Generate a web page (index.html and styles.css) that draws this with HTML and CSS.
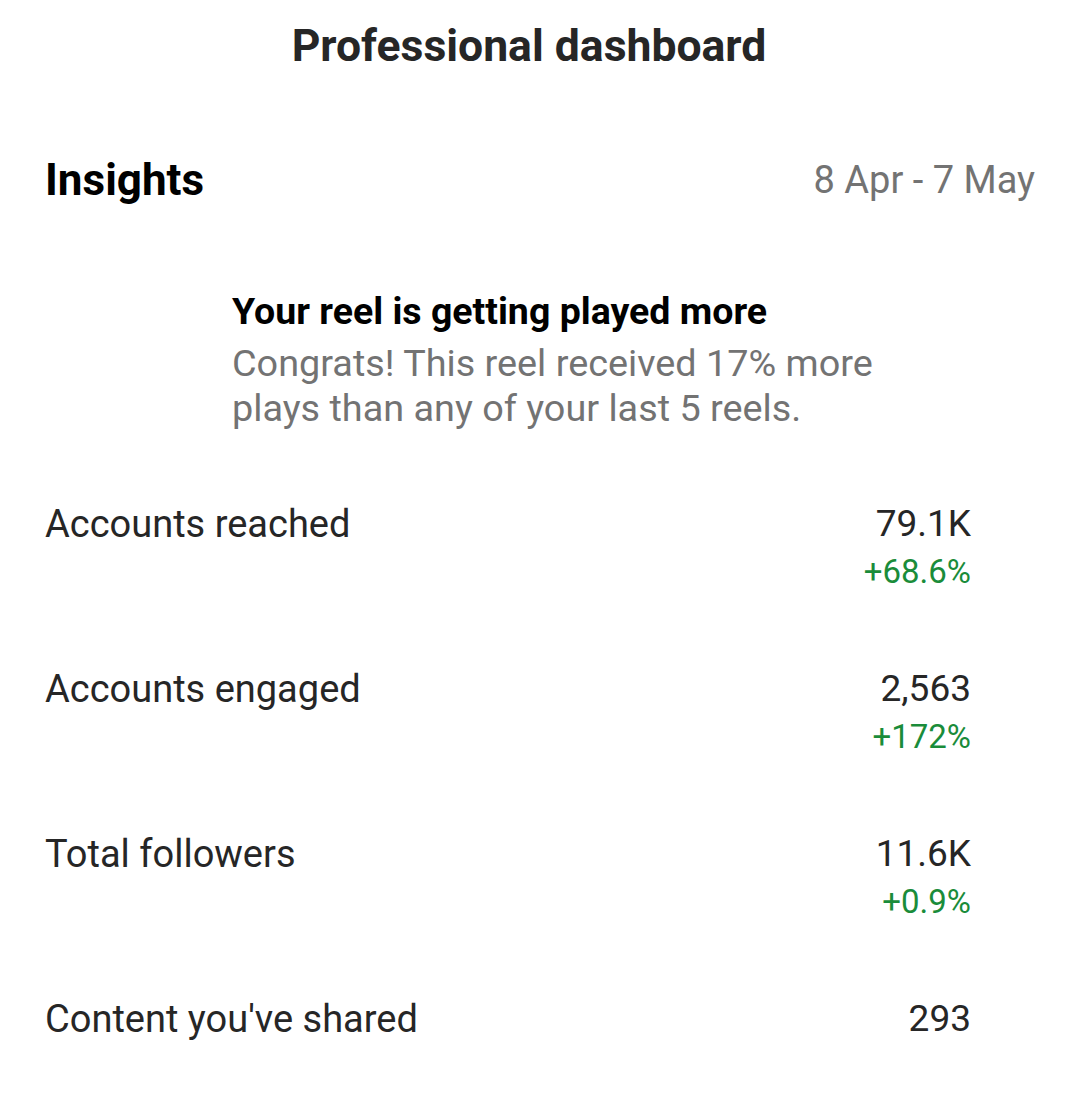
FILE: index.html
```html
<!DOCTYPE html>
<html lang="en">
<head>
    <meta charset="UTF-8">
    <meta name="viewport" content="width=device-width, initial-scale=1.0">
    <title>Professional dashboard</title>
    <link rel="stylesheet" href="styles.css">
</head>
<body>

    <header class="top-bar">
        <h1>Professional dashboard</h1>
    </header>

    <div class="insights-head">
        <h2>Insights</h2>
        <span class="date-range">8 Apr - 7 May</span>
    </div>

    <div class="reel-note">
        <div class="reel-thumb"></div>
        <div class="reel-text">
            <h3>Your reel is getting played more</h3>
            <p>Congrats! This reel received 17% more plays than any of your last 5 reels.</p>
        </div>
    </div>

    <div class="stats">
        <div class="stat-row">
            <span class="stat-label">Accounts reached</span>
            <div class="stat-value">
                <span class="number">79.1K</span>
                <span class="change">+68.6%</span>
            </div>
        </div>
        <div class="stat-row">
            <span class="stat-label">Accounts engaged</span>
            <div class="stat-value">
                <span class="number">2,563</span>
                <span class="change">+172%</span>
            </div>
        </div>
        <div class="stat-row">
            <span class="stat-label">Total followers</span>
            <div class="stat-value">
                <span class="number">11.6K</span>
                <span class="change">+0.9%</span>
            </div>
        </div>
        <div class="stat-row">
            <span class="stat-label">Content you've shared</span>
            <div class="stat-value">
                <span class="number">293</span>
            </div>
        </div>
    </div>

</body>
</html>
```

FILE: styles.css
```css
body {
    margin: 0;
    background-color: #fff;
    font-family: Roboto, "Liberation Sans", sans-serif;
    color: #262626;
}

.top-bar {
    height: 92px;
    display: flex;
    align-items: center;
    justify-content: center;
    padding-right: 22px;
}

.top-bar h1 {
    margin: 0;
    font-size: 44.5px;
    font-weight: 700;
    color: #262626;
}

.insights-head {
    display: flex;
    justify-content: space-between;
    align-items: center;
    padding: 44px 45px 0 45px;
    height: 88px;
}

.insights-head h2 {
    margin: 0;
    font-size: 44px;
    font-weight: 700;
    color: #000;
}

.date-range {
    font-size: 38px;
    color: #737373;
}

.reel-note {
    display: flex;
    padding: 65px 45px 0 45px;
}

.reel-thumb {
    width: 187px;
    flex-shrink: 0;
}

.reel-text h3 {
    margin: 0;
    font-size: 37.5px;
    font-weight: 700;
    color: #000;
    line-height: 44px;
}

.reel-text p {
    margin: 8px 0 0 0;
    font-size: 37.8px;
    line-height: 45px;
    color: #737373;
    width: 690px;
}

.stats {
    padding: 71px 109px 0 45px;
}

.stat-row {
    display: flex;
    justify-content: space-between;
    align-items: flex-start;
    height: 165px;
}

.stat-row:last-child {
    height: auto;
}

.stat-label {
    font-size: 38px;
    line-height: 44px;
}

.stat-value {
    display: flex;
    flex-direction: column;
    align-items: flex-end;
}

.number {
    font-size: 37px;
    line-height: 44px;
}

.change {
    font-size: 33px;
    line-height: 52px;
    color: #1a8c3a;
}
```
